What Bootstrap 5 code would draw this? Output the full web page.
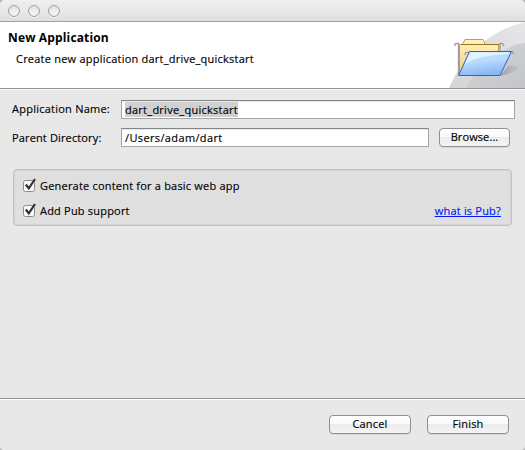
<!DOCTYPE html>
<html lang="en">
<head>
<meta charset="utf-8">
<title>New Application</title>
<link href="https://cdn.jsdelivr.net/npm/bootstrap@5.3.0/dist/css/bootstrap.min.css" rel="stylesheet">
<style>
html{background:#b5b5b5}
body{width:525px;height:450px;overflow:hidden;background:transparent;color:#000;font:11px/16px "Open Sans","Noto Sans",sans-serif;letter-spacing:.2px;-webkit-text-stroke:.15px}
.dialog-window{width:525px;height:450px;background:#e8e8e8;border-radius:5px 5px 4px 4px;overflow:hidden}
.titlebar{height:22px;padding-left:8px;gap:8px;background:linear-gradient(#f0f0f0,#e9e9e9 45%,#dedede);border-bottom:1px solid #a3a3a3}
.light{width:12px;height:12px;border-radius:50%;border:1px solid #a2a2a2;background:radial-gradient(circle at 50% 75%,#f7f7f7,#dcdcdc);box-shadow:0 1px 0 #f5f5f5}
.banner{height:67px;background:#fff;border-bottom:1px solid #929292}
.banner-text{padding:8px 0 0 8px}
.banner h1{font-size:12px;line-height:16px;font-weight:700;margin:0;letter-spacing:.15px;-webkit-text-stroke:0}
.banner p{margin:5px 0 0 8px;letter-spacing:.225px}
.form-area{height:309px;border-top:1px solid #fafafa;padding:10px 10px 0 12px}
.field-row{height:19px;margin-bottom:9px}
.field-row label{width:109px;flex:none}
.name-label{letter-spacing:.24px;padding-bottom:2px}
.dir-label{letter-spacing:.14px}
.field{height:19px;border:1px solid #a5a5a5;border-top-color:#858585;background:#fff;padding:1px 3px;line-height:16px;box-shadow:inset 0 1px 1px #e6e6e6}
.field mark{padding:0;background:#d0d0d0;color:#000;display:inline-block;height:15px;line-height:16px;letter-spacing:.26px}
.dir-value{letter-spacing:.37px}
.push{height:19px;border:1px solid #909090;border-radius:4px;background:linear-gradient(#fff,#fafafa 45%,#ececec 50%,#f4f4f4);padding:0;font-size:11px;line-height:15px;letter-spacing:.18px;color:#000;box-shadow:0 1px 0 #d8d8d8}
.browse{width:71px;margin:0 5px 0 10px;line-height:14px;padding-bottom:2px;letter-spacing:.1px}
.options{margin:22px 3px 0 1px;height:57px;border:1px solid #c2c2c2;border-radius:4px;background:#dfdfdf;box-shadow:inset 0 0 1px 1px #d3d3d3;padding:8px 10px 0 9px}
.option-row{height:16px;margin-bottom:9px}
.option-row svg{margin-right:2px;flex:none}
.option-row a{color:#0018f5;text-decoration:underline}
.actions{height:52px;border-top:1px solid #929292;box-shadow:inset 0 1px 0 #fff;padding:16px 16px 0 0;gap:16px}
.actions .push{width:82px;line-height:14px;padding-bottom:1px}
</style>
<script src="https://cdn.jsdelivr.net/npm/bootstrap@5.3.0/dist/js/bootstrap.bundle.min.js"></script>
</head>
<body>
<div class="dialog-window d-flex flex-column">
  <div class="titlebar d-flex align-items-center"><span class="light"></span><span class="light"></span><span class="light"></span></div>
  <header class="banner d-flex justify-content-between">
    <div class="banner-text"><h1>New Application</h1><p>Create new application dart_drive_quickstart</p></div>
    <svg width="80" height="66" viewBox="445 22 80 66">
      <defs>
        <linearGradient id="curve" x1="0" y1="1" x2="1" y2="0"><stop offset="0" stop-color="#d5d5d8"/><stop offset="1" stop-color="#e6e6e8"/></linearGradient>
        <linearGradient id="curve2" x1="0" y1="0" x2="1" y2="1"><stop offset="0" stop-color="#d6d6d9"/><stop offset="1" stop-color="#c3c5c9"/></linearGradient>
        <linearGradient id="paper" x1="0" y1="0" x2="0" y2="1"><stop offset="0" stop-color="#fff3c4"/><stop offset="1" stop-color="#f3cf73"/></linearGradient>
        <linearGradient id="blue" x1="0" y1="0" x2=".3" y2="1"><stop offset="0" stop-color="#c4e4ff"/><stop offset=".5" stop-color="#b8dafc"/><stop offset="1" stop-color="#8ab8f5"/></linearGradient>
        <linearGradient id="shade"><stop offset="0" stop-color="#9a9aa6"/><stop offset="1" stop-color="#b4b4bf" stop-opacity=".3"/></linearGradient>
      </defs>
      <path d="M449 88C463 56 488 31 525 22V88Z" fill="url(#curve)"/>
      <path d="M466 88C477 68 497 47 525 43V88Z" fill="url(#curve2)"/>
      <path d="M500 76L508 66Q516 64 519 67Q518 72 500 76Z" fill="url(#shade)"/>
      <path d="M454.500 46L455.500 43.500H458.500V75M500 52V43.500H502.500L504 46" fill="none" stroke="#9b9ba6" stroke-width="1.300"/>
      <path d="M459.500 75V44.500H462.500L465 39.500H483L485.500 44.500H498.500V75Z" fill="url(#paper)" stroke="#c2a04e"/>
      <path d="M461 44.500H499" stroke="#9c7518"/>
      <path d="M464.500 55L466 52.500H469M511 51.500H512.500L514 54.500" fill="none" stroke="#9b9ba6" stroke-width="1.300"/>
      <path d="M458.500 75.500L469.500 51.500H511.500L500 75.500Z" fill="url(#blue)" stroke="#3c5eb8"/>
      <path d="M465 64L470.500 52.500H509L508 54Q479 55 465 64Z" fill="#effaff" opacity=".75"/>
    </svg>
  </header>
  <main class="form-area">
    <div class="field-row d-flex align-items-center"><label class="name-label">Application Name:</label><div class="field flex-grow-1"><mark>dart_drive_quickstart</mark></div></div>
    <div class="field-row d-flex align-items-center"><label class="dir-label">Parent Directory:</label><div class="field dir-value flex-grow-1">/Users/adam/dart</div><button class="btn push browse">Browse...</button></div>
    <div class="options">
      <div class="option-row d-flex align-items-center"><svg width="15" height="16" viewBox="0 0 15 16"><rect x=".5" y="2.500" width="11" height="11" rx="2" fill="#fafafa" stroke="#8d8d8d"/><path d="M2.800 6.500L5.800 10.300L12 1" fill="none" stroke="#333" stroke-width="2.200"/></svg><span>Generate content for a basic web app</span></div>
      <div class="option-row d-flex align-items-center"><svg width="15" height="16" viewBox="0 0 15 16"><rect x=".5" y="2.500" width="11" height="11" rx="2" fill="#fafafa" stroke="#8d8d8d"/><path d="M2.800 6.500L5.800 10.300L12 1" fill="none" stroke="#333" stroke-width="2.200"/></svg><span>Add Pub support</span><a href="#" class="ms-auto">what is Pub?</a></div>
    </div>
  </main>
  <footer class="actions d-flex justify-content-end"><button class="btn push">Cancel</button><button class="btn push">Finish</button></footer>
</div>
</body>
</html>
